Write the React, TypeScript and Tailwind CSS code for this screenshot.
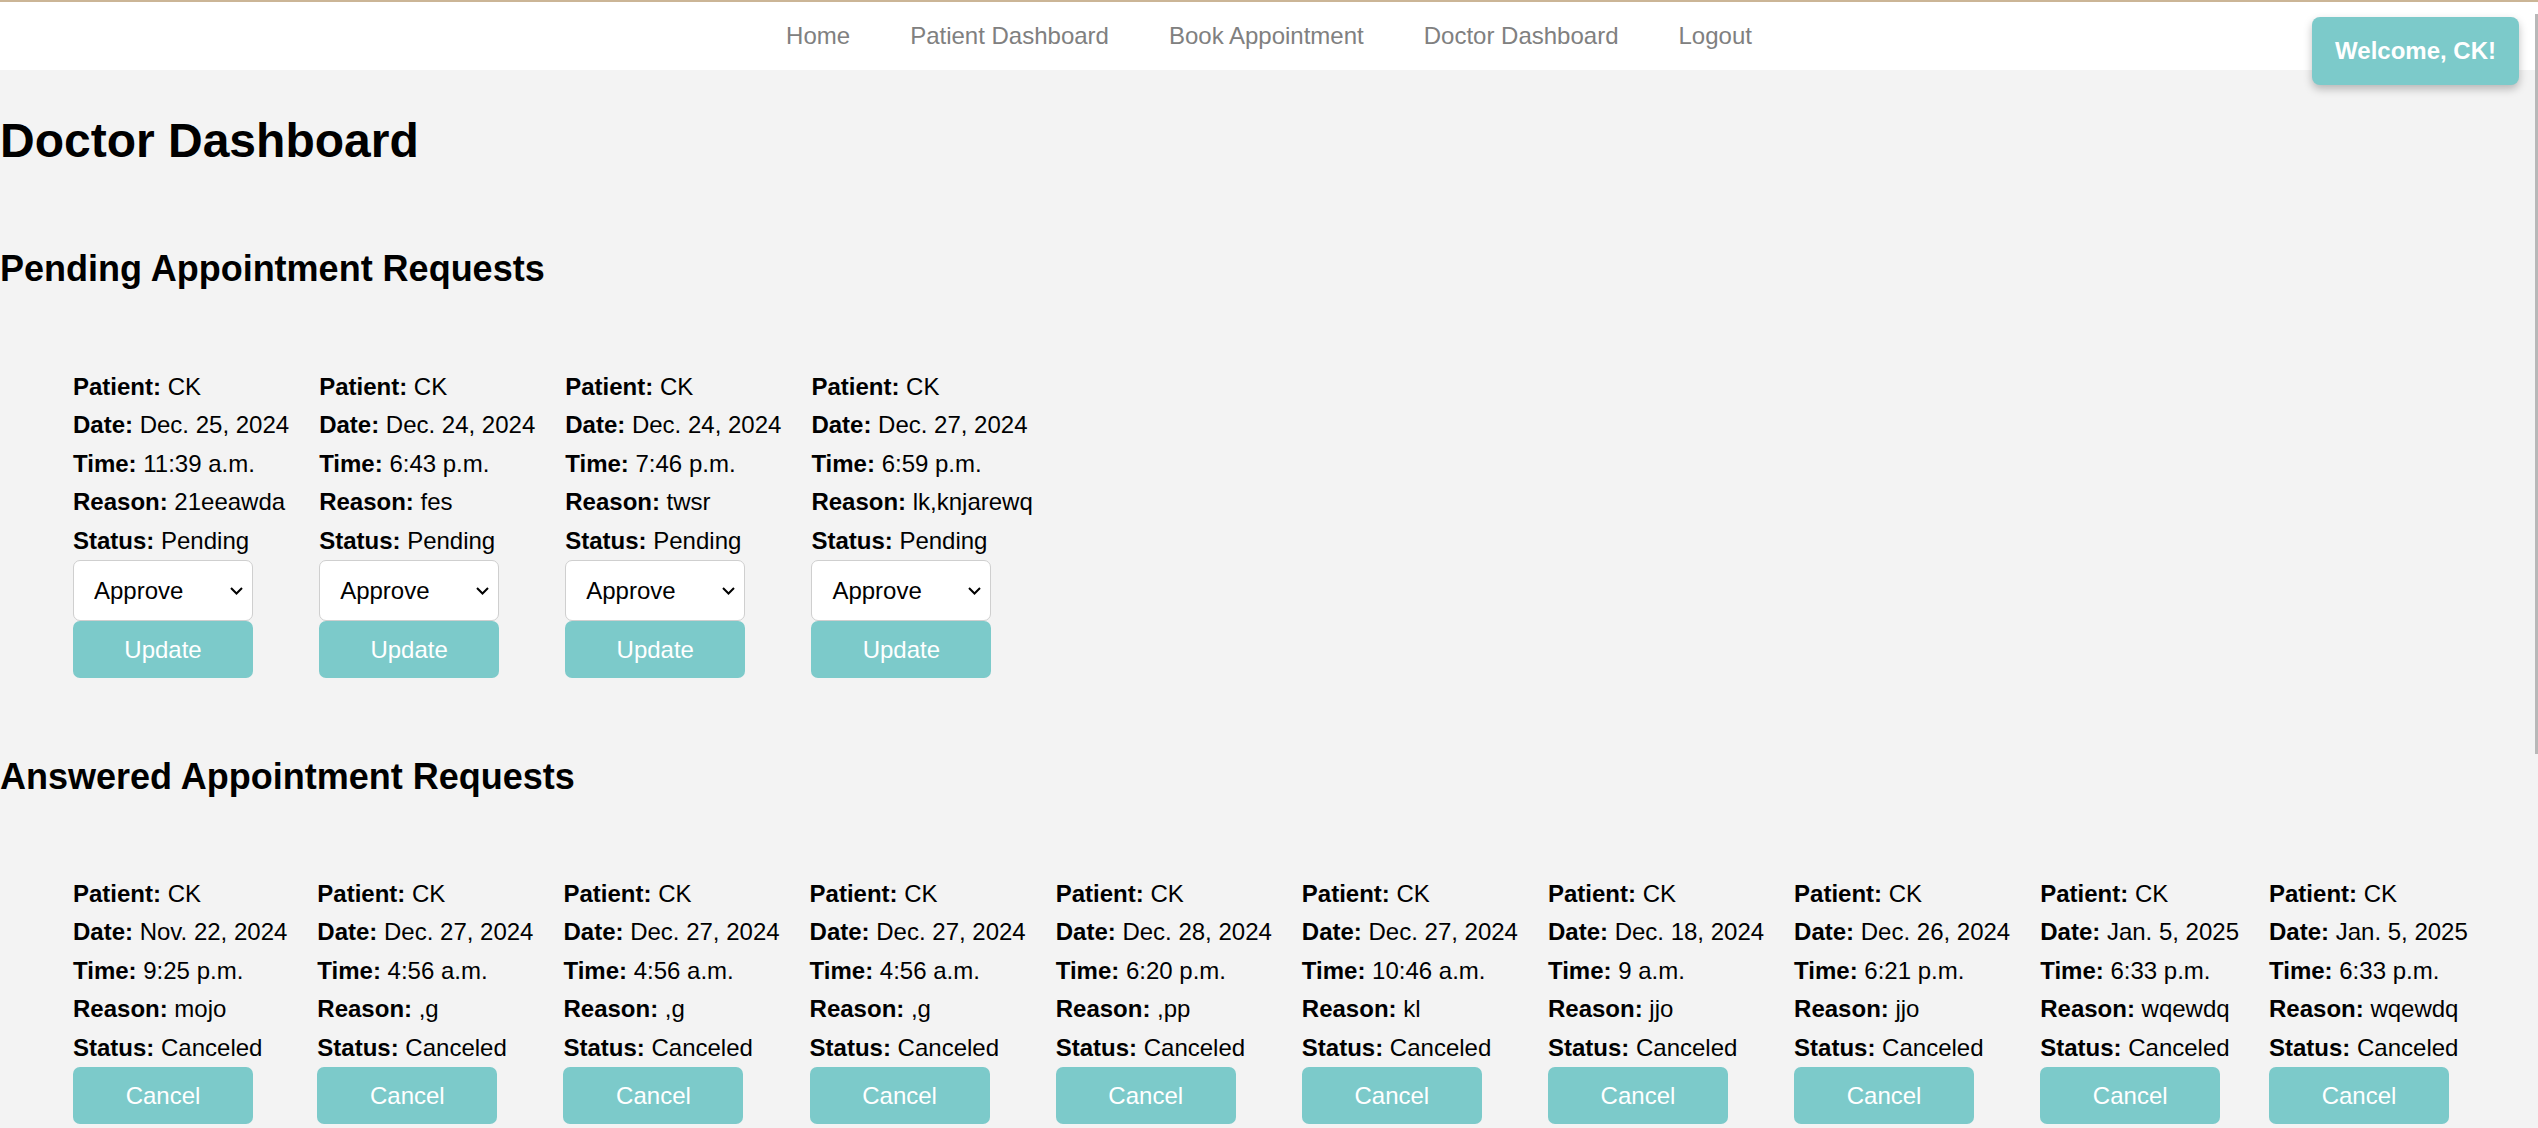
import { useState } from "react";

type Appointment = {
  patient: string;
  date: string;
  time: string;
  reason: string;
  status: string;
};

const pending: Appointment[] = [
  { patient: "CK", date: "Dec. 25, 2024", time: "11:39 a.m.", reason: "21eeawda", status: "Pending" },
  { patient: "CK", date: "Dec. 24, 2024", time: "6:43 p.m.", reason: "fes", status: "Pending" },
  { patient: "CK", date: "Dec. 24, 2024", time: "7:46 p.m.", reason: "twsr", status: "Pending" },
  { patient: "CK", date: "Dec. 27, 2024", time: "6:59 p.m.", reason: "lk,knjarewq", status: "Pending" },
];

const answered: Appointment[] = [
  { patient: "CK", date: "Nov. 22, 2024", time: "9:25 p.m.", reason: "mojo", status: "Canceled" },
  { patient: "CK", date: "Dec. 27, 2024", time: "4:56 a.m.", reason: ",g", status: "Canceled" },
  { patient: "CK", date: "Dec. 27, 2024", time: "4:56 a.m.", reason: ",g", status: "Canceled" },
  { patient: "CK", date: "Dec. 27, 2024", time: "4:56 a.m.", reason: ",g", status: "Canceled" },
  { patient: "CK", date: "Dec. 28, 2024", time: "6:20 p.m.", reason: ",pp", status: "Canceled" },
  { patient: "CK", date: "Dec. 27, 2024", time: "10:46 a.m.", reason: "kl", status: "Canceled" },
  { patient: "CK", date: "Dec. 18, 2024", time: "9 a.m.", reason: "jjo", status: "Canceled" },
  { patient: "CK", date: "Dec. 26, 2024", time: "6:21 p.m.", reason: "jjo", status: "Canceled" },
  { patient: "CK", date: "Jan. 5, 2025", time: "6:33 p.m.", reason: "wqewdq", status: "Canceled" },
  { patient: "CK", date: "Jan. 5, 2025", time: "6:33 p.m.", reason: "wqewdq", status: "Canceled" },
];

const links = ["Home", "Patient Dashboard", "Book Appointment", "Doctor Dashboard", "Logout"];

function Details({ item }: { item: Appointment }) {
  const rows = [
    ["Patient:", item.patient],
    ["Date:", item.date],
    ["Time:", item.time],
    ["Reason:", item.reason],
    ["Status:", item.status],
  ];
  return (
    <div>
      {rows.map(([label, value]) => (
        <p key={label} className="leading-[38.4px] whitespace-nowrap">
          <span className="font-bold">{label}</span> {value}
        </p>
      ))}
    </div>
  );
}

function PendingCard({ item }: { item: Appointment }) {
  const [choice, setChoice] = useState("Approve");
  return (
    <li className="px-[15px] shrink-0">
      <Details item={item} />
      <div className="relative w-[180px]">
        <select
          value={choice}
          onChange={(e) => setChoice(e.target.value)}
          className="appearance-none w-[180px] h-[61px] bg-white border border-[#cfcfcf] rounded-[7px] pl-[20px] text-[24px] text-black"
        >
          <option>Approve</option>
          <option>Reject</option>
        </select>
        <svg
          className="absolute right-[10px] top-[27px] pointer-events-none"
          width="13"
          height="8"
          viewBox="0 0 13 8"
        >
          <polyline points="1,1 6.5,6.5 12,1" fill="none" stroke="#000" strokeWidth="2" />
        </svg>
      </div>
      <button className="w-[180px] h-[57px] bg-[#7ccaca] text-white text-[24px] rounded-[7px]">
        Update
      </button>
    </li>
  );
}

function AnsweredCard({ item }: { item: Appointment }) {
  return (
    <li className="px-[15px] shrink-0">
      <Details item={item} />
      <button className="w-[180px] h-[57px] bg-[#7ccaca] text-white text-[24px] rounded-[7px]">
        Cancel
      </button>
    </li>
  );
}

export default function App() {
  return (
    <div className="relative min-h-screen bg-[#f3f3f3] text-black text-[24px] font-['Liberation_Sans',Arial,sans-serif] overflow-hidden">
      <nav className="h-[70px] bg-white border-t-2 border-[#cbb596] flex items-center justify-center gap-[60px]">
        {links.map((link) => (
          <a key={link} href="#" className="text-[#808080] text-[24px]">
            {link}
          </a>
        ))}
      </nav>

      <div className="absolute top-[17px] right-[19px] bg-[#7ccaca] text-white font-bold text-[24px] px-[23px] h-[68px] flex items-center rounded-[8px] shadow-[0_4px_8px_rgba(0,0,0,0.25)]">
        Welcome, CK!
      </div>

      <div className="absolute right-0 top-[14px] w-[3px] h-[740px] bg-[#b8b8b8]" />

      <h1 className="mt-[43px] text-[48px] font-bold leading-[55px]">Doctor Dashboard</h1>

      <h2 className="mt-[80px] text-[36px] font-bold leading-[41px]">Pending Appointment Requests</h2>
      <ul className="mt-[79px] pl-[58px] flex">
        {pending.map((item, i) => (
          <PendingCard key={i} item={item} />
        ))}
      </ul>

      <h2 className="mt-[78px] text-[36px] font-bold leading-[41px]">Answered Appointment Requests</h2>
      <ul className="mt-[78px] pl-[58px] flex">
        {answered.map((item, i) => (
          <AnsweredCard key={i} item={item} />
        ))}
      </ul>
    </div>
  );
}
